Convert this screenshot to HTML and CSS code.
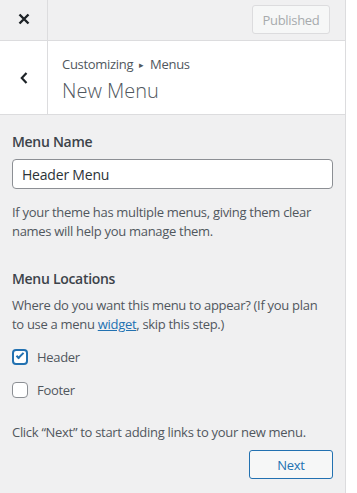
FILE: index.html
```html
<!DOCTYPE html>
<html lang="en">
    <head>
        <title>Customizing Menus</title>
        <meta charset="UTF-8">
        <meta name="viewport" content="width=device-width, initial-scale=1">
        <link rel="stylesheet" href="styles.css">
    </head>
    <body>
        <div id="customizer">
            <div class="topbar">
                <button class="close" aria-label="Close">
                    <svg width="12" height="12" viewBox="0 0 12 12"><path d="M1.5 1.5l9 9M10.5 1.5l-9 9" stroke="#1d2327" stroke-width="2.4" fill="none"/></svg>
                </button>
                <div class="actions">
                    <button class="published" disabled>Published</button>
                </div>
            </div>

            <div class="section-head">
                <button class="back" aria-label="Back">
                    <svg width="8" height="12" viewBox="0 0 8 12"><path d="M6.5 1L1.8 6l4.7 5" stroke="#1d2327" stroke-width="2.2" fill="none"/></svg>
                </button>
                <div class="title">
                    <span class="crumbs">Customizing <span class="arrow">&#9656;</span> Menus</span>
                    <h2>New Menu</h2>
                </div>
            </div>

            <div class="content">
                <label class="control-title" for="menu-name">Menu Name</label>
                <input type="text" id="menu-name" value="Header Menu">
                <p class="desc">If your theme has multiple menus, giving them clear names will help you manage them.</p>

                <h3 class="control-title locations">Menu Locations</h3>
                <p class="desc">Where do you want this menu to appear? (If you plan<br>to use a menu <a href="#">widget</a>, skip this step.)</p>

                <ul class="locations-list">
                    <li>
                        <label><input type="checkbox" checked> Header</label>
                    </li>
                    <li>
                        <label><input type="checkbox"> Footer</label>
                    </li>
                </ul>

                <p class="desc next-hint">Click “Next” to start adding links to your new menu.</p>
                <div class="buttons">
                    <button class="next">Next</button>
                </div>
            </div>
        </div>
    </body>
</html>
```

FILE: styles.css
```css
html {
    box-sizing: border-box;
}
*, *:before, *:after {
    box-sizing: inherit;
}
body {
    margin: 0;
    min-height: 100vh;
    background: #fff;
    font-family: 'Open Sans', 'Noto Sans', sans-serif;
    font-size: 13px;
    letter-spacing: -0.3px;
    color: #50575e;
}
button {
    font-family: inherit;
    letter-spacing: inherit;
}
#customizer {
    width: 346px;
    min-height: 100vh;
    background: #f0f0f1;
    border-right: 1px solid #dcdcde;
}
    .topbar {
        height: 41px;
        display: flex;
        border-bottom: 1px solid #dcdcde;
    }
        .topbar .close {
            width: 48px;
            border: none;
            border-right: 1px solid #dcdcde;
            background: none;
            display: flex;
            align-items: center;
            justify-content: center;
            padding: 0 0 2px;
        }
        .topbar .actions {
            flex: 1;
            display: flex;
            justify-content: flex-end;
            align-items: flex-start;
            padding: 5px 15px 0 0;
        }
        .topbar .published {
            height: 29px;
            width: 78px;
            border: 1px solid #dcdcde;
            border-radius: 3px;
            background: #f6f7f7;
            color: #a7aaad;
            font-size: 13px;
            padding: 0;
        }

    .section-head {
        display: flex;
        height: 74px;
        background: #fff;
        border-bottom: 1px solid #dcdcde;
    }
        .section-head .back {
            width: 48px;
            border: none;
            border-right: 1px solid #dcdcde;
            background: none;
            display: flex;
            align-items: center;
            justify-content: center;
            padding: 0;
        }
        .section-head .title {
            padding: 13px 0 0 14px;
        }
            .crumbs {
                display: block;
                font-size: 13px;
                line-height: 20px;
                color: #50575e;
            }
            .crumbs .arrow {
                font-size: 9px;
                vertical-align: 1px;
                margin: 0 3px;
            }
            .title h2 {
                margin: 3px 0 0;
                font-size: 20px;
                font-weight: 300;
                line-height: 26px;
                letter-spacing: 0;
                color: #50575e;
            }

    .content {
        padding: 17px 12px 12px;
    }
        .control-title {
            display: block;
            margin: 0 0 7px;
            font-size: 14px;
            font-weight: 600;
            line-height: 20px;
            color: #3c434a;
        }
        .content input[type=text] {
            display: block;
            width: 100%;
            height: 30px;
            margin: 0;
            padding: 0 9px;
            border: 1px solid #8c8f94;
            border-radius: 4px;
            background: #fff;
            font-family: inherit;
            font-size: 14px;
            letter-spacing: -0.2px;
            color: #2c3338;
        }
        .desc {
            margin: 14px 0 0;
            line-height: 19px;
        }
        .desc a {
            color: #2271b1;
        }
        .locations {
            margin-top: 28px;
        }
        .locations + .desc {
            margin-top: 0;
        }

        .locations-list {
            list-style: none;
            margin: 13px 0 0;
            padding: 0;
        }
            .locations-list li {
                margin: 0 0 13px;
            }
            .locations-list label {
                display: flex;
                align-items: center;
                gap: 9px;
                line-height: 20px;
            }
            .locations-list input {
                appearance: none;
                width: 16px;
                height: 16px;
                margin: 0;
                border: 1px solid #8c8f94;
                border-radius: 4px;
                background: #fff;
                position: relative;
            }
            .locations-list input:checked {
                border: 2px solid #2271b1;
            }
            .locations-list input:checked:after {
                content: '';
                position: absolute;
                left: 4px;
                top: 0px;
                width: 4px;
                height: 8px;
                border: solid #2271b1;
                border-width: 0 2px 2px 0;
                transform: rotate(45deg);
            }

        .next-hint {
            margin-top: 23px;
        }
        .buttons {
            display: flex;
            justify-content: flex-end;
            margin-top: 8px;
        }
            .buttons .next {
                width: 84px;
                height: 29px;
                border: 1px solid #2271b1;
                border-radius: 3px;
                background: #f6f7f7;
                color: #2271b1;
                font-size: 13px;
                cursor: pointer;
            }
```
